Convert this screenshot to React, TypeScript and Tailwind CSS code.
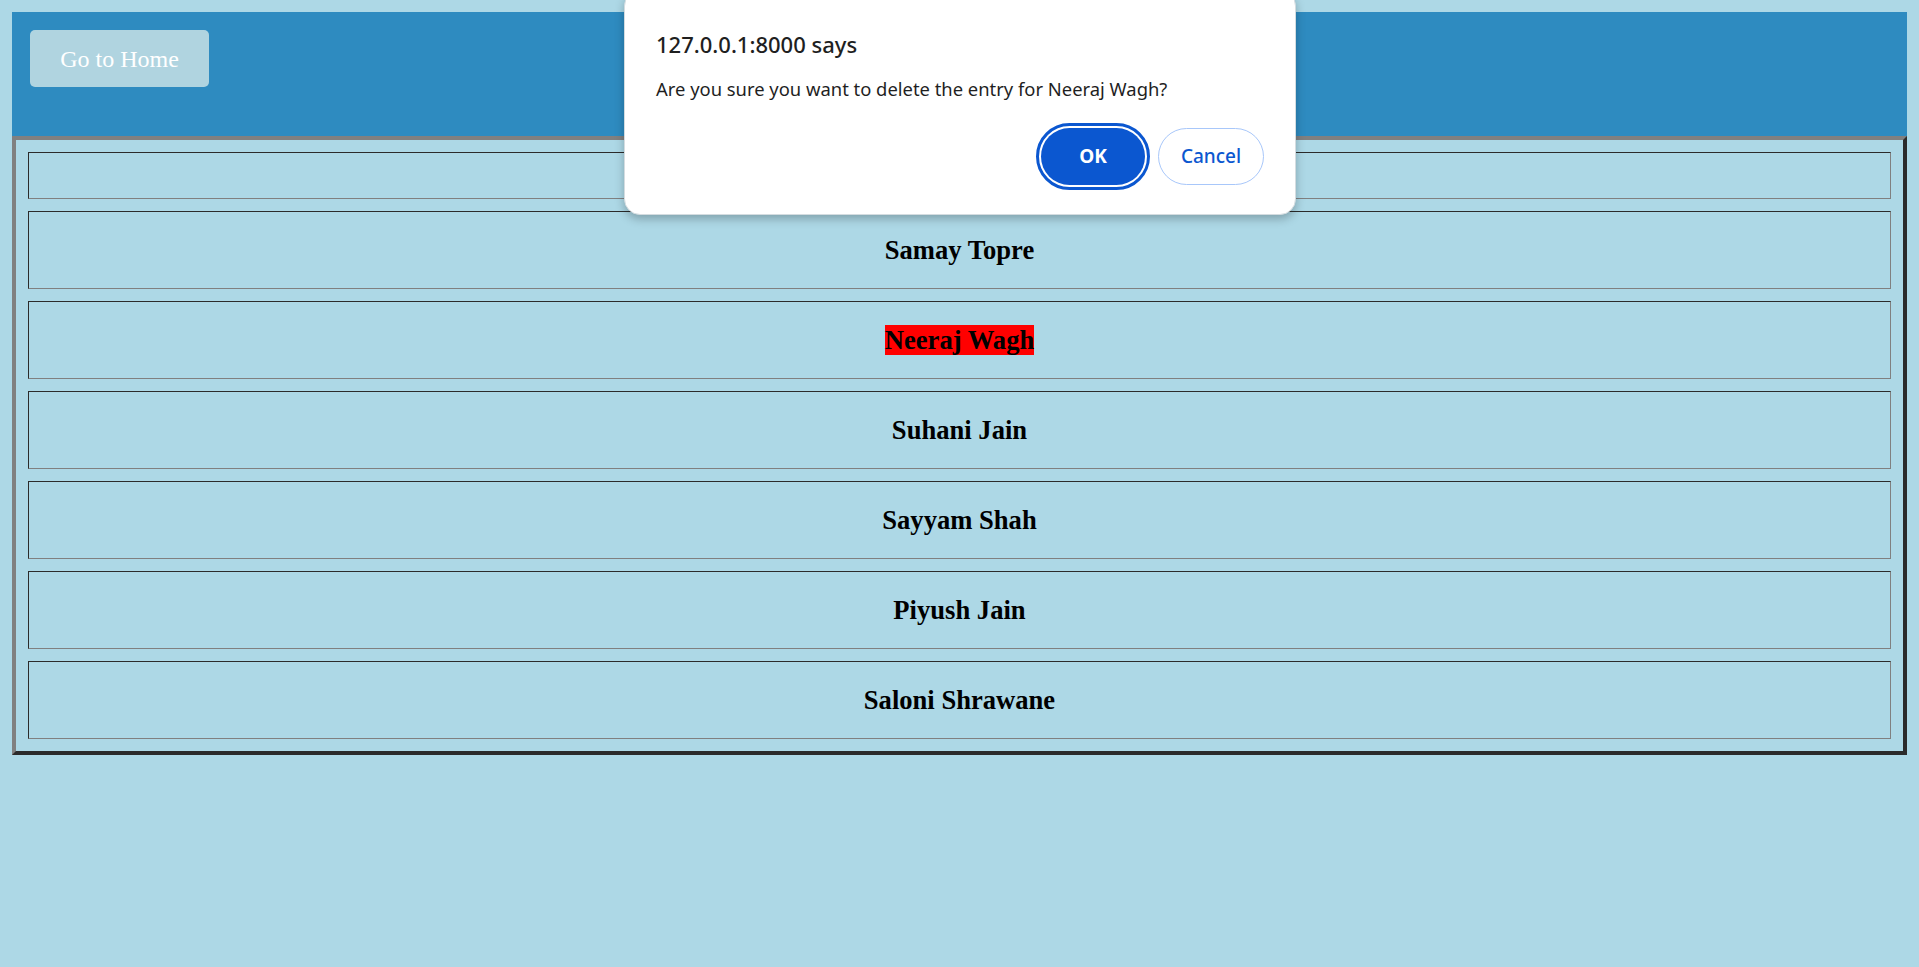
import React from "react";

const names = [
  "Samay Topre",
  "Neeraj Wagh",
  "Suhani Jain",
  "Sayyam Shah",
  "Piyush Jain",
  "Saloni Shrawane",
];

const cell =
  "border border-t-[#2b2b2b] border-l-[#2b2b2b] border-r-[#808080] border-b-[#808080] flex items-center justify-center";

const App = () => {
  const selected = "Neeraj Wagh";

  return (
    <div className="min-h-screen bg-[#add8e6] p-3 font-['Liberation_Serif',serif] relative">
      {/* top bar */}
      <header className="bg-[#2e8bc0] h-[124px] p-[18px]">
        <button className="w-[179px] h-[57px] rounded-[5px] bg-[#b0d4e0] text-white text-[24px]">
          Go to Home
        </button>
      </header>

      {/* entries table */}
      <div className="border-4 border-t-[#808080] border-l-[#808080] border-r-[#2b2b2b] border-b-[#2b2b2b] p-3 flex flex-col gap-3">
        <div className={`${cell} h-[47px]`}></div>
        {names.map((n) => (
          <div key={n} className={`${cell} h-[78px]`}>
            <span
              className={`text-[26.6px] font-bold leading-[30px] text-black ${
                n === selected ? "bg-[#ff0000]" : ""
              }`}
            >
              {n}
            </span>
          </div>
        ))}
      </div>

      {/* browser confirm dialog */}
      <div className="absolute left-[624px] top-[-10px] w-[672px] h-[225px] bg-white rounded-[16px] border border-[#d4dce0] shadow-[0_4px_10px_rgba(0,0,0,0.25)] font-['Noto_Sans',sans-serif] pt-[10px] px-[31px]">
        <div className="text-[22px] font-medium text-[#1f1f1f] mt-[29px] leading-[28px]">
          127.0.0.1:8000 says
        </div>
        <div className="text-[18.4px] text-[#1f1f1f] mt-[19px] leading-[24px]">
          Are you sure you want to delete the entry for Neeraj Wagh?
        </div>
        <div className="flex justify-end gap-[8px] mt-[22px] items-center">
          <div className="rounded-full border-[3px] border-[#0b57d0] p-[2px]">
            <button className="w-[104px] h-[57px] rounded-full bg-[#0b57d0] text-white text-[19px] font-bold">
              OK
            </button>
          </div>
          <button className="w-[106px] h-[57px] rounded-full border border-[#a8c7fa] text-[#0b57d0] text-[19px] font-medium bg-white">
            Cancel
          </button>
        </div>
      </div>
    </div>
  );
};

export default App;
